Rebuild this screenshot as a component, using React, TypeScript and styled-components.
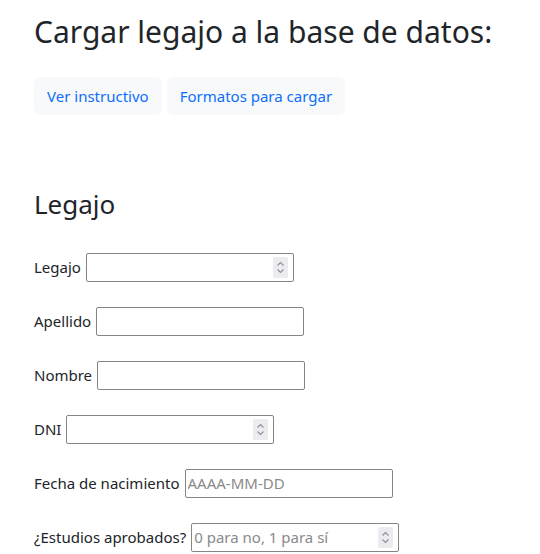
import styled, { createGlobalStyle } from 'styled-components';

const GlobalStyle = createGlobalStyle`
  * {
    box-sizing: border-box;
  }
  body {
    margin: 0;
    background: #fff;
    color: #212529;
    font-family: 'Noto Sans', 'Open Sans', sans-serif;
    font-size: 15px;
    line-height: 1.5;
  }
`;

const Page = styled.div`
  padding: 14px 34px 0;
`;

const Title = styled.h1`
  margin: 0 0 27px;
  font-size: 30px;
  font-weight: 400;
  line-height: 1.2;
`;

const ButtonRow = styled.div`
  display: flex;
  gap: 5px;
`;

const LightButton = styled.button`
  height: 38px;
  padding: 6px 12px;
  border: 1px solid #f8f9fa;
  border-radius: 6px;
  background: #f8f9fa;
  color: #0d6efd;
  font-family: inherit;
  font-size: 15px;
  line-height: 1.5;
  cursor: pointer;
`;

const Subtitle = styled.h2`
  margin: 74px 0 32px;
  font-size: 26px;
  font-weight: 400;
  line-height: 1.2;
`;

const Form = styled.form`
  display: flex;
  flex-direction: column;
  gap: 24px;
`;

const Row = styled.div`
  display: flex;
  align-items: center;
  gap: 5px;
  height: 30px;
`;

const Label = styled.label`
  white-space: nowrap;
`;

const FieldWrap = styled.span`
  position: relative;
  display: inline-flex;
`;

const Field = styled.input`
  width: 208px;
  height: 29px;
  padding: 1px 2px;
  border: 1px solid #858585;
  border-radius: 2px;
  font-family: inherit;
  font-size: 15px;
  color: #212529;
  background: #fff;
  appearance: textfield;

  &::placeholder {
    color: #8a8a8a;
  }

  &::-webkit-inner-spin-button,
  &::-webkit-outer-spin-button {
    -webkit-appearance: none;
    margin: 0;
  }
`;

const Spinner = styled.span`
  position: absolute;
  top: 4px;
  right: 6px;
  width: 15px;
  height: 21px;
  border-radius: 2px;
  background: #ececf0;
  display: flex;
  align-items: center;
  justify-content: center;
  pointer-events: none;
`;

const SpinIcon = () => (
  <svg width='9' height='15' viewBox='0 0 9 15' fill='none' stroke='#8d8d95' strokeWidth='1.1'>
    <path d='M1.5 5.5L4.5 2.5L7.5 5.5' />
    <path d='M1.5 9.5L4.5 12.5L7.5 9.5' />
  </svg>
);

const fields = [
  { id: 'legajo', label: 'Legajo', type: 'number' },
  { id: 'apellido', label: 'Apellido', type: 'text' },
  { id: 'nombre', label: 'Nombre', type: 'text' },
  { id: 'dni', label: 'DNI', type: 'number' },
  { id: 'nacimiento', label: 'Fecha de nacimiento', type: 'text', placeholder: 'AAAA-MM-DD' },
  { id: 'estudios', label: '¿Estudios aprobados?', type: 'number', placeholder: '0 para no, 1 para sí' }
];

const App = () => {
  return (
    <Page>
      <GlobalStyle />
      <Title>Cargar legajo a la base de datos:</Title>
      <ButtonRow>
        <LightButton type='button'>Ver instructivo</LightButton>
        <LightButton type='button'>Formatos para cargar</LightButton>
      </ButtonRow>
      <Subtitle>Legajo</Subtitle>
      <Form>
        {fields.map((f) => (
          <Row key={f.id}>
            <Label htmlFor={f.id}>{f.label}</Label>
            <FieldWrap>
              <Field id={f.id} type={f.type} placeholder={f.placeholder} />
              {f.type === 'number' && (
                <Spinner>
                  <SpinIcon />
                </Spinner>
              )}
            </FieldWrap>
          </Row>
        ))}
      </Form>
    </Page>
  );
};

export default App;
